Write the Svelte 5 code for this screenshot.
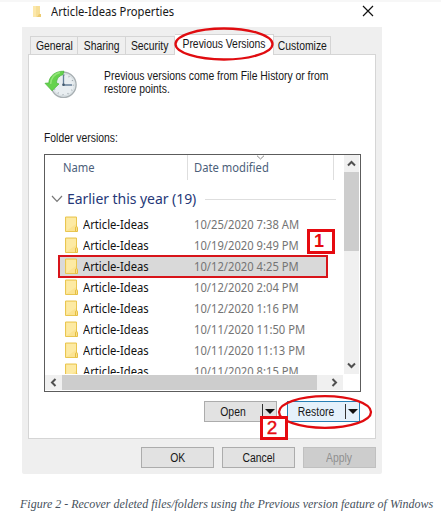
<script>
  const tabs = [
    { name: 'General', width: 48 },
    { name: 'Sharing', width: 48 },
    { name: 'Security', width: 49 },
    { name: 'Previous Versions', width: 99, active: true },
    { name: 'Customize', width: 57 }
  ];
  const dates = [
    '10/25/2020 7:38 AM',
    '10/19/2020 9:49 PM',
    '10/12/2020 4:25 PM',
    '10/12/2020 2:04 PM',
    '10/12/2020 1:16 PM',
    '10/11/2020 11:50 PM',
    '10/11/2020 11:13 PM',
    '10/11/2020 8:15 PM'
  ];
  const selected = 2;
</script>

{#snippet folder()}
  <svg class="folder" width="14" height="17" viewBox="0 0 14 17">
    <path d="M.5 1H11.5V15.5H.5Z" fill="#fbe391" stroke="#e9c650" />
    <path d="M1.5 2H11V8L1.5 14.8Z" fill="#fdeaa3" />
    <path d="M10.5 11.2q2-1.5 2 .5V15.5h-2Z" fill="#fae08a" stroke="#e5bf43" />
  </svg>
{/snippet}

{#snippet arrow(d)}
  <svg width="9" height="9" viewBox="0 0 9 9"><path {d} fill="none" stroke="#505050" stroke-width="2" /></svg>
{/snippet}

<main>
  <header>
    <svg width="10" height="14" viewBox="0 0 10 14">
      <path d="M1 1H8V12H1Z" fill="#f7df98" />
      <path d="M1 1H4V12H1Z" fill="#fce8ab" />
      <path d="M7 9H9V12H5Z" fill="#edcb70" />
    </svg>
    <h1><span class="wide">Article-Ideas Properties</span></h1>
    <svg class="close" width="12" height="12" viewBox="0 0 12 12"><path d="M1 1 11 11M11 1 1 11" stroke="#111" stroke-width="1.2" /></svg>
  </header>

  <section class="dialog">
    <nav>
      {#each tabs as tab}
        <div class="tab" class:active={tab.active} style:width="{tab.width}px">
          <span class="narrow mid">{tab.name}</span>
        </div>
      {/each}
      <svg class="ring tab-ring" width="102" height="36" viewBox="0 0 102 36"><ellipse cx="51" cy="18" rx="48.5" ry="15.5" /></svg>
    </nav>

    <div class="panel">
      <div class="intro">
        <svg width="34" height="30" viewBox="0 0 34 30">
          <circle cx="19.5" cy="14.8" r="12.6" fill="#e4ebef" stroke="#a9b0b3" stroke-width="1.4" />
          <circle cx="19.5" cy="14.8" r="11" fill="#e9eef1" stroke="#d3dadd" stroke-width=".8" />
          <circle cx="19.5" cy="14.8" r="9.8" fill="none" stroke="#8c969c" stroke-width="1.2" stroke-dasharray=".8 4.33" />
          <path d="M19.5 4.5V15H28" fill="none" stroke="#657f98" stroke-width="1.3" />
          <circle cx="19.5" cy="14.8" r="1.3" fill="#43596d" />
          <path d="M20 1.2C11 1 5.2 6.3 4.8 12.9L1 13.3 8 20.8 15 13.9 12.6 13.2C12.3 8.5 15.5 5.6 18.8 4.8Z" fill="#66d24d" stroke="#45b537" stroke-width=".7" />
          <path d="M16 2.4C9.5 4 7 8.5 6.6 14" fill="none" stroke="#92e578" stroke-width="1.5" />
        </svg>
        <p><span class="narrow">Previous versions come from File History or from</span><br /><span class="narrow">restore points.</span></p>
      </div>
      <div class="label"><span class="narrow">Folder versions:</span></div>

      <div class="list">
        <div class="upper">
          <div class="content">
            <div class="columns">
              <div class="name"><span class="wide">Name</span></div>
              <div class="date"><span class="wide">Date modified</span>
                <svg class="sort" width="9" height="5" viewBox="0 0 9 5"><path d="M1 .7 4.5 4 8 .7" fill="none" stroke="#888" /></svg>
              </div>
            </div>
            <div class="group">
              <svg width="12" height="8" viewBox="0 0 12 8"><path d="M1 1 6 6.3 11 1" fill="none" stroke="#777" stroke-width="1.2" /></svg>
              <h2>Earlier this year (19)</h2>
              <hr />
            </div>
            <div class="rows">
              {#each dates as date, i}
                <div class="row" class:selected={i === selected}>
                  {@render folder()}
                  <span class="file"><span class="wide">Article-Ideas</span></span>
                  <span class="when wide">{date}</span>
                </div>
              {/each}
            </div>
          </div>
          <div class="vscroll">
            <div class="up">{@render arrow('M1 6.5 4.5 3 8 6.5')}</div>
            <div class="vthumb"></div>
            <div class="down">{@render arrow('M1 2.5 4.5 6 8 2.5')}</div>
          </div>
        </div>
        <div class="hscroll">
          <div class="left">{@render arrow('M6.5 1 3 4.5 6.5 8')}</div>
          <div class="hthumb"></div>
          <div class="right">{@render arrow('M2.5 1 6 4.5 2.5 8')}</div>
        </div>
        <b class="badge one">1</b>
      </div>

      <div class="actions">
        <div class="split"><span class="narrow mid">Open</span><i></i></div>
        <div class="split restore"><span class="narrow mid">Restore</span><i></i></div>
        <b class="badge two">2</b>
        <svg class="ring restore-ring" width="98" height="38" viewBox="0 0 98 38"><ellipse cx="49" cy="19" rx="46" ry="15.8" /></svg>
      </div>
    </div>

    <footer>
      <div class="button"><span class="narrow mid">OK</span></div>
      <div class="button cancel"><span class="narrow mid">Cancel</span></div>
      <div class="button disabled"><span class="narrow mid">Apply</span></div>
    </footer>
  </section>

  <p class="caption">Figure 2 - Recover deleted files/folders using the Previous version feature of Windows</p>
</main>

<style>
  :global(body) { margin: 0; background: #fff; }
  main, main * { box-sizing: border-box; }
  main {
    width: 441px; height: 525px; overflow: hidden;
    border-top: 2px solid #f7f7f7;
    font: 12px/14px "Liberation Sans", Arial, sans-serif;
    color: #171717; white-space: nowrap;
  }
  .narrow, .wide { display: inline-block; transform-origin: 0 50%; }
  .narrow { transform: scaleX(.865); }
  .wide { transform: scaleX(.935); }
  .mid { transform-origin: 50% 50%; }
  header { height: 25px; display: flex; align-items: flex-start; padding: 3px 0 0 32px; }
  h1 { margin: 0 0 0 9px; width: 311px; font: 12px/14px "Noto Sans", sans-serif; }
  .dialog { width: 360px; height: 447px; margin-left: 22px; padding: 7px 6px 0; background: #efefef; border-radius: 0 0 2px 2px; }
  nav { position: relative; display: flex; align-items: flex-end; height: 20px; padding-left: 2px; }
  .tab { height: 18px; padding-top: 2px; border: 1px solid #d5d5d5; border-width: 1px 1px 0 0; display: flex; justify-content: center; }
  .tab:first-child { border-left-width: 1px; }
  .active { height: 21px; margin-bottom: -1px; background: #fff; z-index: 1; padding-top: 2px; }
  .ring { position: absolute; z-index: 3; fill: none; stroke: #e00c10; stroke-width: 2.3; }
  .tab-ring { left: 145px; top: -8px; }
  .panel { width: 348px; height: 385px; background: #fff; border: 1px solid #d5d5d5; padding: 15px 0 0 15px; }
  .intro { display: flex; height: 61px; }
  .intro p { margin: 0 0 0 26px; line-height: 13px; }
  .label { height: 23px; }
  .list { position: relative; width: 317px; height: 238px; border: 1px solid #5c5c5c; }
  .upper { display: flex; height: 219px; }
  .content { width: 299px; overflow: hidden; font-family: "Noto Sans", sans-serif; }
  .columns { display: flex; height: 25px; width: 289px; border-right: 1px solid #dedede; color: #4c607a; line-height: 26px; }
  .name { width: 143px; padding-left: 18px; border-right: 1px solid #dedede; }
  .date { position: relative; padding-left: 6px; }
  .sort { position: absolute; left: 68px; top: 0; }
  .group { display: flex; align-items: center; height: 34px; padding: 4px 0 0 6px; }
  h2 { margin: 0 8px 0 4px; width: 130px; font: 14px/20px "Noto Sans", sans-serif; letter-spacing: -.05px; color: #263878; }
  hr { width: 131px; margin: 0; border: 0; border-top: 1px solid #dedede; }
  .row { display: flex; align-items: center; height: 21px; width: 284px; padding-left: 20px; }
  .selected { width: 270px; height: 23px; margin: -1px 0 -1px 13px; padding-left: 5px; background: #d9d9d9; border: 2px solid #d8141a; }
  .folder { flex: none; margin-right: 4px; }
  .file { width: 111px; color: #111; }
  .when { color: #747474; }
  .vscroll { width: 15px; background: #f0f0f0; display: flex; flex-direction: column; }
  .up, .down { height: 17px; display: grid; place-items: center; }
  .vthumb { height: 79px; background: #cdcdcd; }
  .down { margin-top: auto; }
  .hscroll { width: 298px; height: 15px; margin-top: 1px; display: flex; background: #f0f0f0; }
  .left { width: 17px; display: grid; place-items: center; }
  .hthumb { width: 255px; background: #cdcdcd; }
  .right { width: 26px; display: grid; place-items: center; padding-left: 9px; }
  .badge { position: absolute; background: #fff; border: 3px solid #e60a10; color: #e60a10; text-align: center; z-index: 4; }
  .one { left: 262px; top: 74px; width: 28px; height: 25px; font-size: 18px; line-height: 19px; padding-right: 4px; }
  .two { left: 216px; top: 24px; width: 28px; height: 24px; font: 19px/18px "Liberation Sans", Arial, sans-serif; padding-right: 4px; -webkit-text-stroke: .4px #e60a10; }
  .actions { position: relative; display: flex; gap: 10px; height: 40px; padding: 9px 0 0 160px; }
  .split { width: 73px; height: 21px; background: #e2e2e2; border: 1px solid #acacac; display: flex; justify-content: space-between; align-items: center; }
  .split span { width: 56px; text-align: center; }
  .split i { width: 14px; height: 15px; border-left: 1px solid #333; display: flex; align-items: center; justify-content: center; }
  .split i::after { content: ''; border: 5px solid transparent; border-top: 5px solid #111; border-bottom: 0; }
  .restore { background: #e5f1fb; border-color: #277fb5; }
  .restore-ring { left: 232px; top: 1px; }
  footer { display: flex; gap: 8px; padding: 8px 0 0 113px; }
  .button { width: 73px; height: 21px; background: #e2e2e2; border: 1px solid #acacac; text-align: center; line-height: 20px; }
  .disabled { background: #cdcdcd; border-color: #c0c0c0; color: #909090; }
  .caption { margin: 22px 0 0 20px; font: italic 12px/16px "Liberation Serif", "Times New Roman", serif; color: #46515c; }
</style>
